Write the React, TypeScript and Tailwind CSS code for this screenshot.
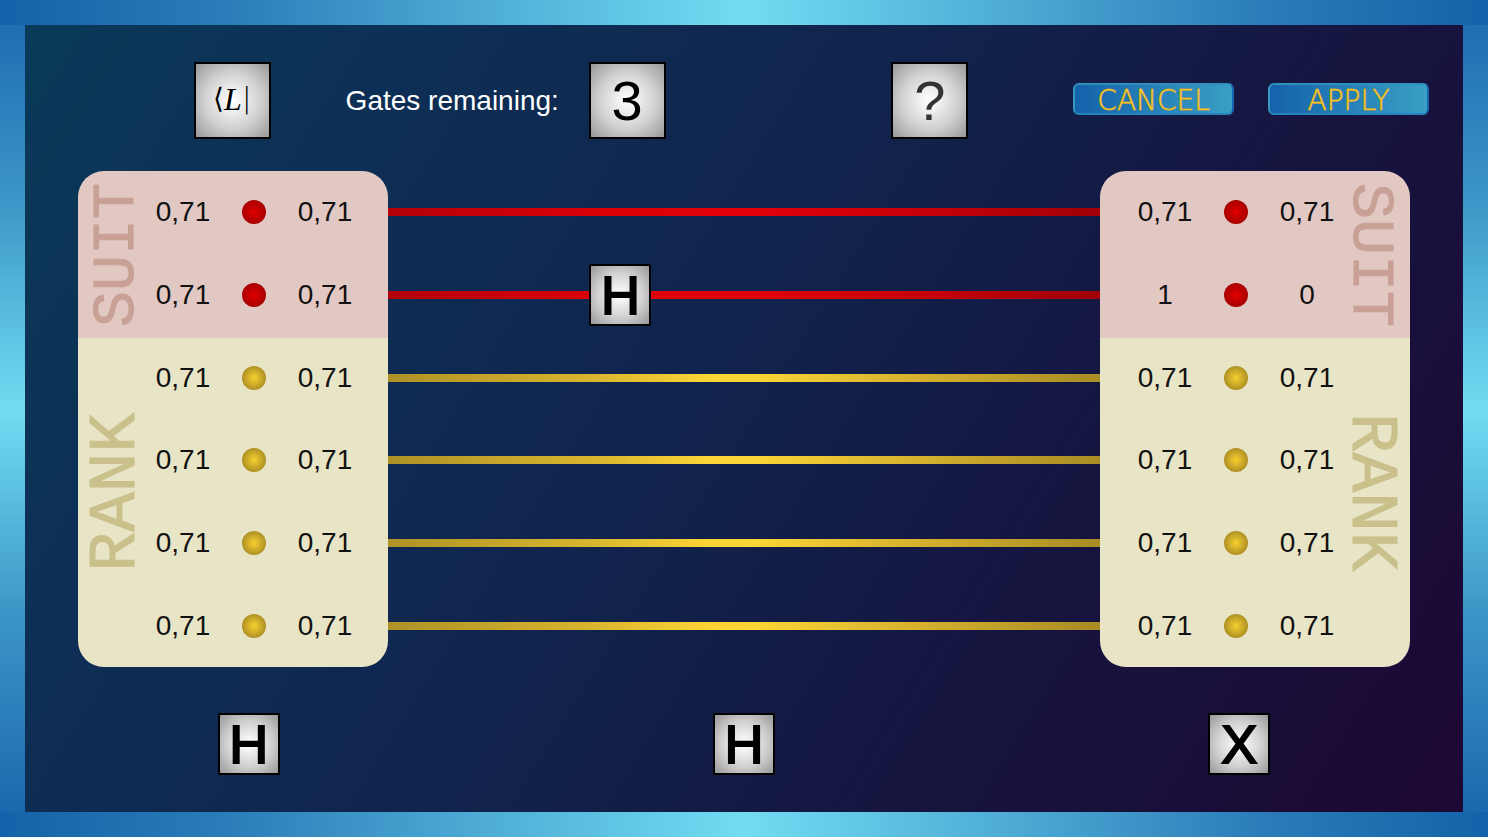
import type { ReactNode } from 'react';

type Pair = [string, string];

const inputs: Pair[] = [
  ['0,71', '0,71'],
  ['0,71', '0,71'],
  ['0,71', '0,71'],
  ['0,71', '0,71'],
  ['0,71', '0,71'],
  ['0,71', '0,71'],
];

const outputs: Pair[] = [
  ['0,71', '0,71'],
  ['1', '0'],
  ['0,71', '0,71'],
  ['0,71', '0,71'],
  ['0,71', '0,71'],
  ['0,71', '0,71'],
];

const tileFill = 'bg-[radial-gradient(circle_farthest-corner,#ffffff_0%,#f4f4f4_15%,#d0d0d0_55%,#989898_100%)]';

function Tile({ children, className = '' }: { children: ReactNode; className?: string }) {
  return (
    <div className={`flex size-[77px] items-center justify-center border-2 border-black text-[56px] leading-none ${tileFill} ${className}`}>
      {children}
    </div>
  );
}

function Gate({ name, className = '' }: { name: string; className?: string }) {
  return (
    <button
      type="button"
      aria-label={`${name} gate`}
      className={`flex size-[62px] items-center justify-center border-2 border-black text-[54px] leading-none text-black [-webkit-text-stroke:2px_#000] ${tileFill} ${className}`}
    >
      {name}
    </button>
  );
}

function ActionButton({ children, className = '' }: { children: ReactNode; className?: string }) {
  return (
    <button
      type="button"
      className={`mb-1 flex h-8 items-center justify-center rounded-md border-2 border-t-[#2f90be] border-r-[#1767b0] border-b-[#2584bd] border-l-[#3497c2] bg-linear-to-r from-[#1562ab] to-[#3a9fc4] pt-1 font-['DejaVu_Sans',sans-serif] text-[28px] leading-none font-extralight text-[#f4c62a] [paint-order:stroke] [-webkit-text-stroke:1px_#b59a45] ${className}`}
    >
      {children}
    </button>
  );
}

function Dot({ suit }: { suit: boolean }) {
  return (
    <span
      className={`size-6 rounded-full ${
        suit
          ? 'bg-[radial-gradient(circle_closest-side,#e00000,#a80000)]'
          : 'bg-[radial-gradient(circle_closest-side,#f8d030,#ae9024)]'
      }`}
    />
  );
}

function PanelLabels({ flipped }: { flipped: boolean }) {
  const turn = flipped ? 'rotate-180' : '';
  return (
    <div
      className={`flex flex-col items-center font-['Liberation_Mono',monospace] leading-none [-webkit-text-stroke:1px_currentColor] ${
        flipped ? 'w-[70px] pl-2' : 'w-[68px] pr-3'
      }`}
    >
      <div className="flex h-[168px] items-center justify-center text-[#c9a096]">
        <span className={`text-[60px] [writing-mode:vertical-rl] ${turn}`}>SUIT</span>
      </div>
      <div className="flex h-[306px] items-center justify-center text-[#c9c08c]">
        <span className={`text-[66px] [writing-mode:vertical-rl] ${turn}`}>RANK</span>
      </div>
    </div>
  );
}

function Values({ rows }: { rows: Pair[] }) {
  return (
    <div className="grid grid-cols-[70px_72px_70px] grid-rows-6">
      {rows.map(([a, b], i) => (
        <div key={i} className="col-span-3 grid grid-cols-subgrid place-items-center text-[28px] leading-none text-[#111111]">
          <span>{a}</span>
          <Dot suit={i < 2} />
          <span>{b}</span>
        </div>
      ))}
    </div>
  );
}

const panel =
  'flex w-[310px] shrink-0 rounded-[26px] bg-[linear-gradient(to_bottom,#e2c8c3_167px,#e8e4c6_167px)]';

export default function App() {
  return (
    <div className="flex min-h-screen flex-col bg-[linear-gradient(to_right,#1462a9,#2a7cb8_15%,#72dcf2_50%,#2a7cb8_85%,#1462a9)] py-[25px] font-['Liberation_Sans',Arial,sans-serif]">
      <div className="flex grow flex-col bg-[linear-gradient(to_bottom,#1f6db3,#3b95c6_22%,#72dcf2_49%,#3b95c6_75%,#1b68ae)] px-[25px]">
        <main className="flex grow flex-col bg-[linear-gradient(122deg,#0a3a58_0%,#0d3056_18%,#11234c_48%,#16143f_72%,#1c0833_100%)] pt-[37px] pb-[37px]">
          <header className="grid grid-cols-[169fr_77px_75fr_320px_226fr_77px_105fr_161px_34fr_161px_34fr] items-center">
            <Tile className="col-start-2">
              <span className="flex items-center pb-1 font-['DejaVu_Sans',sans-serif] text-[28px] font-extralight">
                ⟨<i className="font-['Liberation_Serif',serif] text-[32px] font-normal">L</i>|
              </span>
            </Tile>
            <div className="col-start-4 flex items-center justify-between">
              <span className="text-[28px] leading-none whitespace-nowrap text-white">Gates remaining:</span>
              <Tile>3</Tile>
            </div>
            <button type="button" aria-label="Help" className="col-start-6">
              <Tile className="text-[#333333]">?</Tile>
            </button>
            <ActionButton className="col-start-8">CANCEL</ActionButton>
            <ActionButton className="col-start-10">APPLY</ActionButton>
          </header>

          <section className="mt-8 flex h-[496px] px-[53px]">
            <div className={panel}>
              <PanelLabels flipped />
              <Values rows={inputs} />
            </div>
            <div className="grid grow grid-rows-6">
              {inputs.map((_, i) => (
                <div key={i} className="relative flex items-center">
                  <div
                    className={`h-2 w-full ${
                      i < 2
                        ? 'bg-[linear-gradient(to_right,#b40008,#dc0008_30%,#e2000a_50%,#c80008_75%,#a00008)]'
                        : 'bg-[linear-gradient(to_right,#ae9226,#d8b42e_28%,#fbd436_45%,#fbd436_52%,#d4b02e_75%,#a88c24)]'
                    }`}
                  />
                  {i === 1 && <Gate name="H" className="absolute left-[28.3%]" />}
                </div>
              ))}
            </div>
            <div className={`${panel} justify-end`}>
              <Values rows={outputs} />
              <PanelLabels flipped={false} />
            </div>
          </section>

          <footer className="mt-[46px] flex justify-between px-[13.4%]">
            <Gate name="H" />
            <Gate name="H" />
            <Gate name="X" />
          </footer>
        </main>
      </div>
    </div>
  );
}
